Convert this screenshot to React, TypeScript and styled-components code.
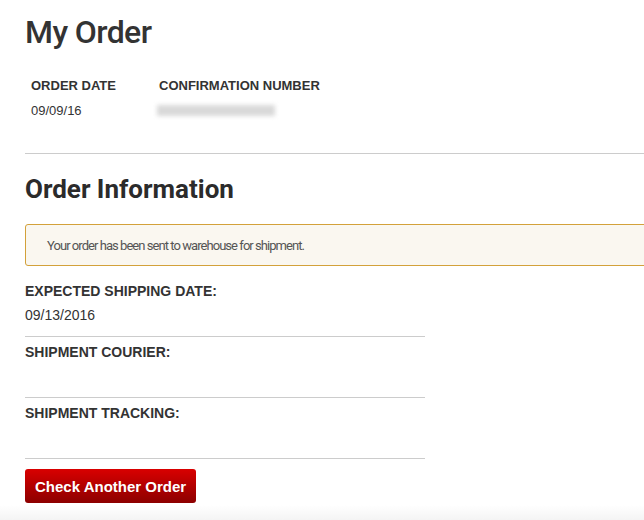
import React from "react";
import styled, { createGlobalStyle } from "styled-components";

const Global = createGlobalStyle`
  html, body { margin: 0; padding: 0; background: #fff; }
  body { font-family: "Liberation Sans", Arial, sans-serif; color: #333; }
`;

const Page = styled.div`
  width: 644px;
  height: 520px;
  overflow: hidden;
  display: flex;
  flex-direction: column;
  background: linear-gradient(to bottom, #fff 0, #fff 505px, #f4f4f4 520px);
`;

const Content = styled.main`
  padding: 12px 0 0 25px;
  display: flex;
  flex-direction: column;
`;

const Title = styled.h1`
  margin: 0;
  font-family: Roboto, "Liberation Sans", sans-serif;
  font-weight: 500;
  font-size: 32px;
  line-height: 40px;
  letter-spacing: -0.6px;
  color: #333;
`;

const Meta = styled.div`
  display: grid;
  grid-template-columns: 128px auto;
  row-gap: 5px;
  margin: 24px 0 0 6px;
  font-size: 13px;
  line-height: 20px;
`;

const MetaHead = styled.div`
  font-weight: 700;
  color: #333;
`;

const MetaValue = styled.div`
  color: #333;
`;

const Blurred = styled.div`
  width: 118px;
  height: 11px;
  margin-top: 4px;
  margin-left: -2px;
  background: #d9d9d9;
  filter: blur(2px);
`;

const Rule = styled.hr`
  margin: 32px 0 0;
  border: 0;
  border-top: 1px solid #ccc;
`;

const Heading = styled.h2`
  margin: 19px 0 0;
  font-family: Roboto, "Liberation Sans", sans-serif;
  font-weight: 700;
  font-size: 26px;
  line-height: 32px;
  letter-spacing: 0;
  color: #2b2b2b;
`;

const Alert = styled.div`
  margin: 19px -10px 0 0;
  padding: 0 0 0 21px;
  height: 40px;
  display: flex;
  align-items: center;
  background: #faf7f0;
  border: 1px solid #d3a13a;
  border-radius: 3px;
  font-family: Roboto, "Liberation Sans", sans-serif;
  font-size: 13px;
  letter-spacing: -0.95px;
  color: #555;
`;

const Fields = styled.div`
  width: 400px;
  margin-top: 10px;
  display: flex;
  flex-direction: column;
`;

const Field = styled.div`
  padding: 5px 0 10px;
  border-bottom: 1px solid #ccc;
  display: flex;
  flex-direction: column;
`;

const FieldLabel = styled.div`
  font-size: 14px;
  font-weight: 700;
  line-height: 20px;
  color: #333;
`;

const FieldValue = styled.div`
  margin-top: 4px;
  font-size: 14px;
  line-height: 21px;
  min-height: 21px;
  color: #333;
`;

const Button = styled.button`
  align-self: flex-start;
  margin-top: 10px;
  height: 34px;
  padding: 0 10px;
  border: 0;
  border-radius: 3px;
  background: linear-gradient(to bottom, #d90000, #8c0000);
  color: #fff;
  font-family: "Liberation Sans", Arial, sans-serif;
  font-weight: 700;
  font-size: 15px;
  cursor: pointer;
`;

export default function App() {
  const fields = [
    { label: "EXPECTED SHIPPING DATE:", value: "09/13/2016" },
    { label: "SHIPMENT COURIER:", value: "" },
    { label: "SHIPMENT TRACKING:", value: "" },
  ];
  return (
    <Page>
      <Global />
      <Content>
        <Title>My Order</Title>
        <Meta>
          <MetaHead>ORDER DATE</MetaHead>
          <MetaHead>CONFIRMATION NUMBER</MetaHead>
          <MetaValue>09/09/16</MetaValue>
          <Blurred aria-hidden="true" />
        </Meta>
        <Rule />
        <Heading>Order Information</Heading>
        <Alert>Your order has been sent to warehouse for shipment.</Alert>
        <Fields>
          {fields.map((f) => (
            <Field key={f.label}>
              <FieldLabel>{f.label}</FieldLabel>
              <FieldValue>{f.value}</FieldValue>
            </Field>
          ))}
        </Fields>
        <Button>Check Another Order</Button>
      </Content>
    </Page>
  );
}
